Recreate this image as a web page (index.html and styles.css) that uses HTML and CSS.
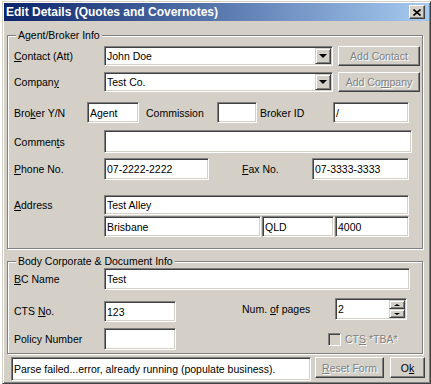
FILE: index.html
```html
<!DOCTYPE html>
<html lang="en">
<head>
  <meta charset="UTF-8">
  <title>Edit Details (Quotes and Covernotes)</title>
  <link rel="stylesheet" href="styles.css">
</head>
<body>

<div class="dialog">
  <div class="titlebar">
    <span class="title">Edit Details (Quotes and Covernotes)</span>
    <button class="close" title="Close">
      <svg width="8" height="7" viewBox="0 0 8 7"><path d="M0.5 0.5 L7.5 6.5 M7.5 0.5 L0.5 6.5" stroke="#000" stroke-width="1.6"/></svg>
    </button>
  </div>

  <div class="content">
    <!-- Agent / broker -->
    <fieldset class="group group-agent">
      <legend>Agent/Broker Info</legend>

      <div class="row row-contact">
        <span class="lbl lbl-main"><u>C</u>ontact (Att)</span>
        <div class="field combo">John Doe<span class="drop"><i class="arrow-down"></i></span></div>
        <button class="btn btn-add" disabled>Add Contact</button>
      </div>

      <div class="row row-company">
        <span class="lbl lbl-main">Compan<u>y</u></span>
        <div class="field combo">Test Co.<span class="drop"><i class="arrow-down"></i></span></div>
        <button class="btn btn-add" disabled>Add Co<u>m</u>pany</button>
      </div>

      <div class="row row-broker">
        <span class="lbl lbl-broker">Bro<u>k</u>er Y/N</span>
        <div class="field f-agent">Agent</div>
        <span class="lbl lbl-commission">Commission</span>
        <div class="field f-commission"></div>
        <span class="lbl lbl-brokerid">Broker ID</span>
        <div class="field f-brokerid">/</div>
      </div>

      <div class="row row-comments">
        <span class="lbl lbl-main">Commen<u>t</u>s</span>
        <div class="field f-comments"></div>
      </div>

      <div class="row row-phone">
        <span class="lbl lbl-main"><u>P</u>hone No.</span>
        <div class="field f-phone">07-2222-2222</div>
        <span class="lbl lbl-fax"><u>F</u>ax No.</span>
        <div class="field f-fax">07-3333-3333</div>
      </div>

      <div class="row row-address">
        <span class="lbl lbl-main"><u>A</u>ddress</span>
        <div class="field f-street">Test Alley</div>
      </div>

      <div class="row row-city">
        <span class="lbl lbl-main"></span>
        <div class="field f-city">Brisbane</div>
        <div class="field f-state">QLD</div>
        <div class="field f-postcode">4000</div>
      </div>
    </fieldset>

    <!-- Body corporate -->
    <fieldset class="group group-bc">
      <legend>Body Corporate &amp; Document Info</legend>

      <div class="row row-bcname">
        <span class="lbl lbl-main"><u>B</u>C Name</span>
        <div class="field f-bcname">Test</div>
      </div>

      <div class="row row-cts">
        <span class="lbl lbl-main lbl-cts">CTS <u>N</u>o.</span>
        <div class="field f-small f-cts">123</div>
        <span class="lbl lbl-pages">Num. <u>o</u>f pages</span>
        <div class="field spin">2<span class="spin-btns"><span class="spin-btn"><i class="arrow-up"></i></span><span class="spin-btn"><i class="arrow-down small"></i></span></span></div>
      </div>

      <div class="row row-policy">
        <span class="lbl lbl-main">Policy Number</span>
        <div class="field f-small"></div>
        <span class="check"></span>
        <span class="lbl lbl-tba disabled">CT<u>S</u> *TBA*</span>
      </div>
    </fieldset>

    <div class="footer">
      <div class="field status">Parse failed...error, already running (populate business).</div>
      <button class="btn btn-reset" disabled><u>R</u>eset Form</button>
      <button class="btn btn-ok">O<u>k</u></button>
    </div>
  </div>
</div>

</body>
</html>
```

FILE: styles.css
```css
* {
  box-sizing: border-box;
}
body {
  margin: 0;
  background-color: #fff;
  font-family: "Liberation Sans", Arial, sans-serif;
  font-size: 10.5px;
  color: #000;
}
u {
  text-underline-offset: 1px;
}

/* window frame */
.dialog {
  margin: 1px 0 0 2px;
  width: 429px;
  height: 383px;
  padding: 1px;
  background-color: #d4d0c8;
  border: 1px solid;
  border-color: #d4d0c8 #404040 #404040 #d4d0c8;
  box-shadow: inset 1px 1px #fff, inset -1px -1px #808080;
}
.titlebar {
  height: 18px;
  display: flex;
  align-items: center;
  justify-content: space-between;
  padding: 0 4px 0 2px;
  background: linear-gradient(to right, #0a246a, #a6caf0);
  color: #fff;
  font-weight: bold;
  font-size: 12px;
}
.close {
  width: 16px;
  height: 14px;
  padding: 0;
  display: flex;
  align-items: center;
  justify-content: center;
  background-color: #d4d0c8;
  border: 1px solid;
  border-color: #fff #404040 #404040 #fff;
  box-shadow: inset -1px -1px #808080;
}

.content {
  padding: 8px 6px 0 3px;
}

/* group boxes */
.group {
  margin: 0;
  border: 1px solid #808080;
  box-shadow: 1px 1px #fff, inset 1px 1px #fff;
  padding: 5px 0 11px 0;
}
.group legend {
  margin-left: 8px;
  padding: 0 2px;
  line-height: 12px;
  background-color: #d4d0c8;
}
.group-bc {
  margin-top: 6px;
  padding: 1px 0 3px 0;
}

.row {
  display: flex;
  align-items: center;
}
.row-contact { height: 20px; }
.row-company { height: 20px; margin-top: 6px; }
.row-broker { height: 21px; margin-top: 10px; }
.row-comments { height: 23px; margin-top: 7px; }
.row-phone { height: 22px; margin-top: 5px; }
.row-address { height: 20px; margin-top: 15px; }
.row-city { height: 21px; margin-top: 1px; }
.row-bcname { height: 22px; }
.row-cts { height: 24px; margin-top: 8px; align-items: flex-start; }
.row-policy { height: 22px; margin-top: 6px; }

/* labels */
.lbl {
  flex: none;
  white-space: nowrap;
}
.lbl-main {
  width: 96px;
  padding-left: 6px;
}
.lbl-broker {
  width: 79px;
  padding-left: 6px;
}
.lbl-commission {
  width: 71px;
  margin-left: 7px;
}
.lbl-brokerid {
  width: 73px;
  margin-left: 3px;
}
.lbl-fax {
  width: 70px;
  margin-left: 33px;
}
.lbl-cts {
  align-self: flex-end;
  line-height: 21px;
  padding-top: 3px;
}
.lbl-pages {
  width: 93px;
  margin-left: 66px;
  line-height: 22px;
}
.lbl-tba {
  margin-left: 4px;
}
.disabled,
.btn:disabled {
  color: #808080;
  text-shadow: 1px 1px #fff;
}

/* sunken text boxes */
.field {
  flex: none;
  height: 100%;
  display: flex;
  align-items: center;
  padding: 0 2px;
  white-space: nowrap;
  background-color: #fff;
  border: 1px solid;
  border-color: #808080 #fff #fff #808080;
  box-shadow: inset 1px 1px #404040, inset -1px -1px #d4d0c8;
}
.combo {
  width: 229px;
  padding-right: 1px;
}
.f-agent { width: 52px; }
.f-commission { width: 40px; }
.f-brokerid { width: 76px; }
.f-comments { width: 308px; }
.f-phone { width: 105px; }
.f-fax { width: 97px; }
.f-street { width: 305px; }
.f-city { width: 157px; }
.f-state { width: 72px; margin-left: 1px; }
.f-postcode { width: 74px; margin-left: 1px; }
.f-bcname { width: 306px; }
.f-small { width: 72px; }
.f-cts {
  height: 21px;
  align-self: flex-end;
}

/* dropdown and spinner buttons */
.drop,
.spin-btn {
  display: flex;
  align-items: center;
  justify-content: center;
  background-color: #d4d0c8;
  border: 1px solid;
  border-color: #d4d0c8 #404040 #404040 #d4d0c8;
  box-shadow: inset 1px 1px #fff, inset -1px -1px #808080;
}
.drop {
  margin-left: auto;
  width: 16px;
  height: 16px;
}
.arrow-down {
  width: 0;
  height: 0;
  border-left: 4px solid transparent;
  border-right: 4px solid transparent;
  border-top: 4px solid #000;
}
.arrow-down.small,
.arrow-up {
  border-left-width: 3px;
  border-right-width: 3px;
}
.arrow-down.small {
  border-top-width: 2px;
}
.arrow-up {
  width: 0;
  height: 0;
  border-left: 3px solid transparent;
  border-right: 3px solid transparent;
  border-bottom: 2px solid #000;
}
.spin {
  width: 72px;
  height: 22px;
  padding-right: 1px;
  align-self: flex-start;
}
.spin-btns {
  margin-left: auto;
  width: 16px;
  height: 18px;
  display: flex;
  flex-direction: column;
}
.spin-btn {
  flex: 1;
}

.check {
  width: 13px;
  height: 13px;
  margin-left: 152px;
  background-color: #d4d0c8;
  border: 1px solid;
  border-color: #808080 #fff #fff #808080;
  box-shadow: inset 1px 1px #404040, inset -1px -1px #d4d0c8;
}

/* push buttons */
.btn {
  flex: none;
  padding: 0;
  font: inherit;
  color: #000;
  background-color: #d4d0c8;
  border: 1px solid;
  border-color: #fff #404040 #404040 #fff;
  box-shadow: inset -1px -1px #808080;
  cursor: pointer;
}
.btn-add {
  width: 82px;
  height: 20px;
  margin-left: 5px;
}

.footer {
  display: flex;
  align-items: flex-start;
  margin-top: 3px;
  padding-left: 4px;
}
.status {
  width: 300px;
  height: 24px;
}
.btn-reset {
  width: 69px;
  height: 21px;
  margin-left: 4px;
}
.btn-ok {
  width: 35px;
  height: 21px;
  margin-left: 6px;
}
```
